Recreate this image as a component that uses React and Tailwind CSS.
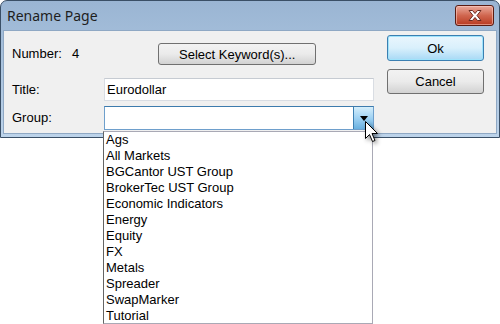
const groups = [
  "Ags",
  "All Markets",
  "BGCantor UST Group",
  "BrokerTec UST Group",
  "Economic Indicators",
  "Energy",
  "Equity",
  "FX",
  "Metals",
  "Spreader",
  "SwapMarker",
  "Tutorial",
];

function CloseButton() {
  return (
    <button
      type="button"
      className="flex h-[21px] w-[39px] items-center justify-center rounded-[3px] border border-[#5a1c12] bg-gradient-to-b from-[#e9a99b] via-[#d0664f] to-[#b8391f] shadow-[inset_0_0_0_1px_rgba(255,210,200,0.55)]"
    >
      <svg width="16" height="13" viewBox="0 0 16 13">
        <path
          d="M2 1.5 L5.5 1.5 L8 4.5 L10.5 1.5 L14 1.5 L10 6.5 L14 11.5 L10.5 11.5 L8 8.5 L5.5 11.5 L2 11.5 L6 6.5 Z"
          fill="#ffffff"
          stroke="#6b2a20"
          strokeWidth="1"
          strokeLinejoin="round"
        />
      </svg>
    </button>
  );
}

function Cursor() {
  return (
    <svg
      width="16"
      height="24"
      viewBox="0 0 16 24"
      className="absolute left-[364px] top-[120px] drop-shadow-[2px_2px_2px_rgba(0,0,0,0.45)]"
    >
      <path
        d="M1.5 1.5 L1.5 18.5 L5.5 14.5 L8.5 21.5 L11 20.5 L8 13.5 L13.5 13.5 Z"
        fill="#ffffff"
        stroke="#000000"
        strokeWidth="1"
        strokeLinejoin="miter"
      />
    </svg>
  );
}

export default function App() {
  return (
    <div className="relative h-[324px] w-[500px] overflow-hidden bg-white font-['Liberation_Sans',Arial,sans-serif] text-[13px] text-black">
      <div className="h-[138px] w-[500px] rounded-t-[7px] border border-[#3a4f66] bg-gradient-to-b from-[#9ab5d3] to-[#bcd3ea] px-[2px]">
        <div className="flex h-[29px] items-center justify-between pl-[4px] pr-[3px]">
          <span className="font-['Noto_Sans',sans-serif] text-[14px] leading-none text-[#1e1e1e]">Rename Page</span>
          <CloseButton />
        </div>
        <div className="flex h-[104px] border border-[#8fa8c4] bg-[#f0f0f0]">
          <div className="w-[383px]">
            <div className="mt-[12px] flex h-[22px] items-center pl-[8px]">
              <span className="w-[60px]">Number:</span>
              <span>4</span>
              <button
                type="button"
                className="ml-[79px] h-[22px] w-[158px] rounded-[3px] border border-[#707070] bg-gradient-to-b from-[#f2f2f2] via-[#ebebeb] to-[#d2d2d2] text-[13px] leading-none"
              >
                Select Keyword(s)...
              </button>
            </div>
            <div className="mt-[13px] flex h-[23px] items-center pl-[8px]">
              <span className="w-[92px]">Title:</span>
              <div className="flex h-[23px] w-[270px] items-center border border-[#d9dde3] border-t-[#c6cbd2] bg-white pl-[2px]">
                Eurodollar
              </div>
            </div>
            <div className="mt-[5px] flex h-[24px] items-center pl-[8px]">
              <span className="w-[92px]">Group:</span>
              <div className="flex h-[24px] w-[270px] border border-[#6e9fcc] border-t-[#3d7bad] bg-white">
                <div className="flex-1" />
                <div className="flex w-[20px] items-center justify-center border-l border-[#3c7fb1] bg-gradient-to-b from-[#d5eefb] via-[#9fd2f3] to-[#68b0e0]">
                  <svg width="8" height="5" viewBox="0 0 8 5">
                    <path d="M0 0 L8 0 L4 5 Z" fill="#000000" />
                  </svg>
                </div>
              </div>
            </div>
          </div>
          <div className="flex flex-col gap-[8px] pt-[4px]">
            <button
              type="button"
              className="h-[26px] w-[97px] rounded-[3px] border border-[#3c7fb1] bg-gradient-to-b from-[#eaf6fd] via-[#d9f0fc] to-[#a7d9f5] leading-none shadow-[inset_0_0_0_1px_#9fe3fb]"
            >
              Ok
            </button>
            <button
              type="button"
              className="h-[25px] w-[97px] rounded-[3px] border border-[#707070] bg-gradient-to-b from-[#f2f2f2] via-[#ebebeb] to-[#d2d2d2] leading-none"
            >
              Cancel
            </button>
          </div>
        </div>
      </div>
      <div className="absolute left-[103px] top-[131px] h-[193px] w-[270px] border border-[#a9a9b5] border-l-[#646464] bg-white pl-[2px]">
        {groups.map((g) => (
          <div key={g} className="h-[16px] leading-[16px]">
            {g}
          </div>
        ))}
      </div>
      <Cursor />
    </div>
  );
}
